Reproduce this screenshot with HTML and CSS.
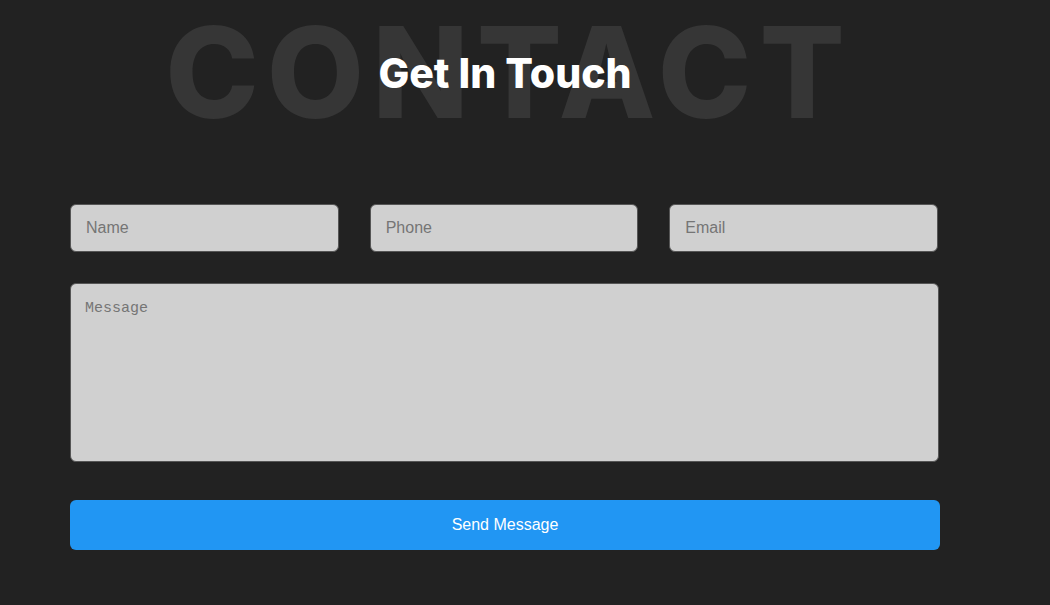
FILE: index.html
```html
<!DOCTYPE html>
<html>
<head>
<meta charset="utf-8">
<link rel="stylesheet" href="styles.css">
</head>
<body>
<section class="contact">
  <div class="heading">
    <div class="bg-word">CONTACT</div>
    <h2 class="title">Get In Touch</h2>
  </div>
  <form class="form">
    <div class="row">
      <input class="field" type="text" placeholder="Name">
      <input class="field" type="text" placeholder="Phone">
      <input class="field" type="text" placeholder="Email">
    </div>
    <textarea class="message" placeholder="Message"></textarea>
    <button class="send" type="button">Send Message</button>
  </form>
</section>
</body>
</html>
```
FILE: styles.css
```css
html, body {
  margin: 0;
  padding: 0;
  background: #222222;
  height: 100%;
}
body {
  font-family: "Liberation Sans", Arial, sans-serif;
  overflow: hidden;
}
.contact {
  padding: 9px 0 0 70px;
  width: 870px;
}
.heading {
  position: relative;
  text-align: center;
  height: 131px;
}
.bg-word {
  font-family: Inter, "Liberation Sans", sans-serif;
  font-weight: 800;
  font-size: 126px;
  line-height: 126px;
  color: #363636;
  letter-spacing: 8px;
  padding-left: 8px;
  white-space: nowrap;
}
.title {
  position: absolute;
  left: 0;
  right: 0;
  top: 44px;
  margin: 0;
  font-family: Inter, "Liberation Sans", sans-serif;
  font-weight: 800;
  font-size: 41px;
  line-height: 41px;
  color: #ffffff;
}
.form {
  margin-top: 64px;
  display: flex;
  flex-direction: column;
}
.row {
  display: flex;
  gap: 31px;
  width: 868px;
}
.field {
  flex: 1;
  box-sizing: border-box;
  height: 48px;
  width: 0;
  padding: 0 15px;
  border: 1px solid #555555;
  border-radius: 6px;
  background: #d0d0d0;
  font-family: "Liberation Sans", Arial, sans-serif;
  font-size: 16px;
  color: #333;
  outline: none;
}
.field::placeholder, .message::placeholder {
  color: #757575;
}
.message {
  margin-top: 31px;
  box-sizing: border-box;
  height: 179px;
  width: 869px;
  padding: 16px 14px;
  border: 1px solid #555555;
  border-radius: 6px;
  background: #d0d0d0;
  font-family: "Liberation Mono", monospace;
  font-size: 15px;
  resize: none;
  outline: none;
}
.send {
  margin-top: 38px;
  height: 50px;
  width: 100%;
  border: none;
  border-radius: 6px;
  background: #2196f3;
  color: #ffffff;
  font-family: "Liberation Sans", Arial, sans-serif;
  font-size: 16px;
}
```
